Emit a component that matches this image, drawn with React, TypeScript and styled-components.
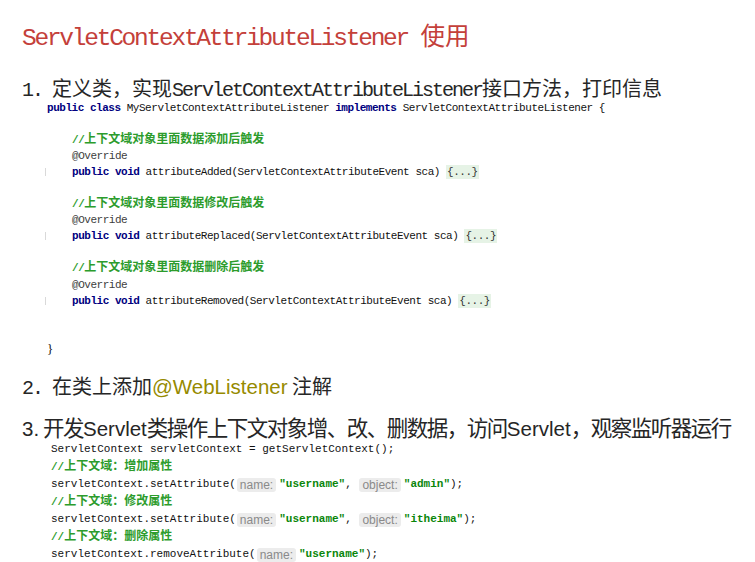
import React from "react";
import styled, { createGlobalStyle } from "styled-components";

const GlobalStyle = createGlobalStyle`
  html, body { margin: 0; padding: 0; background: #ffffff; }
  body { font-family: "Liberation Sans", "Noto Sans CJK SC", sans-serif; }
`;

const Page = styled.div`
  width: 755px;
  height: 562px;
  overflow: hidden;
  box-sizing: border-box;
  padding: 19px 0 0 22px;
  background: #ffffff;
`;

const Title = styled.h1`
  margin: 0;
  height: 32px;
  font-weight: normal;
  font-size: 24.5px;
  line-height: 32px;
  color: #c4403a;
  font-family: "Noto Sans CJK SC", sans-serif;
  white-space: pre;
`;

const MonoLatin = styled.span<{ $track: number }>`
  font-family: "Liberation Mono", monospace;
  letter-spacing: ${(p) => p.$track}px;
`;

const Heading = styled.div<{ $mt: number; $size: number; $lh: number; $track?: number }>`
  margin-top: ${(p) => p.$mt}px;
  height: ${(p) => p.$lh}px;
  font-size: ${(p) => p.$size}px;
  line-height: ${(p) => p.$lh}px;
  letter-spacing: ${(p) => p.$track || 0}px;
  color: #262626;
  font-family: "Noto Sans CJK SC", sans-serif;
  white-space: pre;
`;

const Num = styled.span`
  display: inline-block;
  width: 30px;
  font-family: "Liberation Mono", monospace;
  letter-spacing: -2px;
`;

const SansNum = styled.span`
  display: inline-block;
  width: 21px;
  font-family: "Liberation Sans", sans-serif;
  font-size: 20.5px;
  letter-spacing: 0;
`;

const Sans = styled.span<{ $color?: string }>`
  font-family: "Liberation Sans", sans-serif;
  font-size: 20.5px;
  letter-spacing: 0;
  color: ${(p) => p.$color || "inherit"};
`;

const Code = styled.div<{ $left: number; $mt: number; $lh: number; $track: number }>`
  --line: ${(p) => p.$lh}px;
  margin-left: ${(p) => p.$left}px;
  margin-top: ${(p) => p.$mt}px;
  font-family: "Liberation Mono", monospace;
  font-size: 11px;
  letter-spacing: ${(p) => p.$track}px;
  line-height: ${(p) => p.$lh}px;
  color: #111;
`;

const Line = styled.div<{ $indent?: number; $mark?: boolean }>`
  position: relative;
  height: var(--line);
  padding-left: ${(p) => p.$indent || 0}px;
  white-space: pre;
  &::before {
    content: "";
    display: ${(p) => (p.$mark ? "block" : "none")};
    position: absolute;
    left: -2px;
    top: 4px;
    width: 1px;
    height: 8px;
    background: #d9d9d9;
  }
`;

const Kw = styled.span`
  color: #000080;
  font-weight: bold;
`;

const Anno = styled.span`
  color: #3d3d3d;
`;

const Comment = styled.span`
  color: #2c9c2c;
  font-weight: bold;
`;

const Han = styled.span`
  font-family: "Noto Sans CJK SC", sans-serif;
  font-size: 12px;
  line-height: 1;
  letter-spacing: 0;
`;

const Fold = styled.span`
  background: #e6f3e6;
  color: #333;
  padding: 1px 1px;
`;

const Str = styled.span`
  color: #0a860a;
  font-weight: bold;
`;

const Hint = styled.span`
  display: inline-block;
  height: 14px;
  line-height: 14px;
  padding: 0 3px;
  margin: 0 3px 0 1px;
  border-radius: 3px;
  background: #ececec;
  color: #8a8a8a;
  font-family: "Liberation Sans", sans-serif;
  font-size: 12px;
  letter-spacing: 0;
  vertical-align: -2px;
`;

const Brace = styled.span`
  font-family: "Liberation Serif", serif;
  font-size: 13px;
`;

type Method = { comment: string; name: string };

const methods: Method[] = [
  { comment: "上下文域对象里面数据添加后触发", name: "attributeAdded" },
  { comment: "上下文域对象里面数据修改后触发", name: "attributeReplaced" },
  { comment: "上下文域对象里面数据删除后触发", name: "attributeRemoved" },
];

export default function App() {
  return (
    <>
      <GlobalStyle />
      <Page>
        <Title>
          <MonoLatin $track={-2.25}>ServletContextAttributeListener </MonoLatin>使用
        </Title>

        <Heading $mt={27} $size={20} $lh={20}>
          <Num>1. </Num>定义类，实现<MonoLatin $track={-2}>ServletContextAttributeListener</MonoLatin>接口方法，打印信息
        </Heading>

        <Code $left={25} $mt={1.5} $lh={16.1} $track={-0.47}>
          <Line>
            <Kw>public</Kw> <Kw>class</Kw> MyServletContextAttributeListener <Kw>implements</Kw> ServletContextAttributeListener {"{"}
          </Line>
          {methods.map((m) => (
            <React.Fragment key={m.name}>
              <Line> </Line>
              <Line $indent={25}>
                <Comment>
                  //<Han>{m.comment}</Han>
                </Comment>
              </Line>
              <Line $indent={25}>
                <Anno>@Override</Anno>
              </Line>
              <Line $indent={25} $mark>
                <Kw>public</Kw> <Kw>void</Kw> {m.name}(ServletContextAttributeEvent sca) <Fold>{"{...}"}</Fold>
              </Line>
            </React.Fragment>
          ))}
          <Line> </Line>
          <Line> </Line>
          <Line>
            <Brace>{"}"}</Brace>
          </Line>
        </Code>

        <Heading $mt={19} $size={20} $lh={20}>
          <Num>2. </Num>在类上添加<Sans $color="#968a00">@WebListener</Sans> 注解
        </Heading>

        <Heading $mt={20} $size={21.5} $lh={22} $track={-1.5}>
          <SansNum>3.</SansNum>开发<Sans>Servlet</Sans>类操作上下文对象增、改、删数据，访问<Sans>Servlet</Sans>，观察监听器运行
        </Heading>

        <Code $left={29} $mt={3} $lh={17.5} $track={0}>
          <Line>ServletContext servletContext = getServletContext();</Line>
          <Line>
            <Comment>
              //<Han>上下文域：增加属性</Han>
            </Comment>
          </Line>
          <Line>
            servletContext.setAttribute(<Hint>name:</Hint>
            <Str>"username"</Str>, <Hint>object:</Hint>
            <Str>"admin"</Str>);
          </Line>
          <Line>
            <Comment>
              //<Han>上下文域：修改属性</Han>
            </Comment>
          </Line>
          <Line>
            servletContext.setAttribute(<Hint>name:</Hint>
            <Str>"username"</Str>, <Hint>object:</Hint>
            <Str>"itheima"</Str>);
          </Line>
          <Line>
            <Comment>
              //<Han>上下文域：删除属性</Han>
            </Comment>
          </Line>
          <Line>
            servletContext.removeAttribute(<Hint>name:</Hint>
            <Str>"username"</Str>);
          </Line>
        </Code>
      </Page>
    </>
  );
}
